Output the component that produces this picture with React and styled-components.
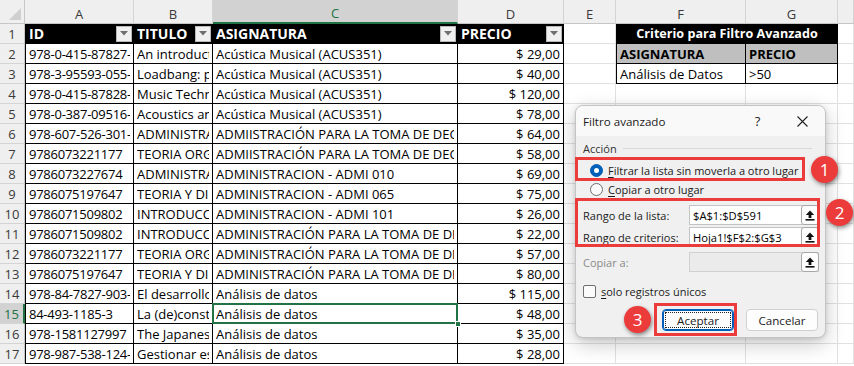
import React from 'react';
import styled, { createGlobalStyle, css } from 'styled-components';

const GlobalStyle = createGlobalStyle`
  html, body { margin: 0; padding: 0; background: #fff; }
  body { font-family: "Open Sans", "Noto Sans", sans-serif; overflow: hidden; }
  *, *::before, *::after { box-sizing: border-box; }
`;

const GREEN = '#217346';
const RED = '#ec3b3b';

const Stage = styled.div`
  position: relative;
  width: 854px;
  height: 366px;
  overflow: hidden;
  background: #fff;
`;

const Sheet = styled.div`
  display: grid;
  grid-template-columns: 25px 109px 79px 245px 106px 52px 130px 92px 1fr;
  grid-template-rows: 24px repeat(17, 20px);
  font-family: "Open Sans", "Noto Sans", sans-serif;
  font-size: 13px;
  color: #000;
`;

const Corner = styled.div`
  background: #efefef;
  border-right: 1px solid #c6c6c6;
  border-bottom: 1px solid #c6c6c6;
  display: flex;
  align-items: flex-end;
  justify-content: flex-end;
  padding: 0 3px 3px 0;
`;

const ColHead = styled.div`
  background: ${p => (p.$sel ? '#d2d2d2' : '#efefef')};
  color: ${p => (p.$sel ? GREEN : '#3a3a3a')};
  border-right: 1px solid #d4d4d4;
  border-bottom: ${p => (p.$sel ? `2px solid ${GREEN}` : '1px solid #c6c6c6')};
  display: flex;
  align-items: center;
  justify-content: center;
  padding-top: 4px;
  font-size: 13px;
`;

const RowHead = styled.div`
  background: ${p => (p.$sel ? '#d2d2d2' : '#efefef')};
  color: ${p => (p.$sel ? GREEN : '#3a3a3a')};
  border-right: ${p => (p.$sel ? `2px solid ${GREEN}` : '1px solid #c6c6c6')};
  border-bottom: 1px solid #d4d4d4;
  display: flex;
  align-items: center;
  justify-content: center;
  font-size: 13px;
`;

const Cell = styled.div`
  position: relative;
  display: flex;
  align-items: center;
  justify-content: ${p => (p.$align === 'right' ? 'flex-end' : p.$align === 'center' ? 'center' : 'flex-start')};
  padding: 0 3px;
  white-space: nowrap;
  overflow: ${p => (p.$active ? 'visible' : 'hidden')};
  background: ${p => p.$bg || 'transparent'};
  color: ${p => p.$color || '#000'};
  font-weight: ${p => (p.$bold ? 700 : 400)};
  font-size: ${p => p.$size || 13}px;
  border-right: 1px solid ${p => (p.$boxed ? '#000' : '#e1e1e1')};
  border-bottom: 1px solid ${p => (p.$boxed ? '#000' : '#e1e1e1')};
  ${p => p.$lead && css`border-left: 1px solid #000;`}
  ${p => p.$span && css`grid-column: span ${p.$span};`}
  ${p => p.$active && css`
    z-index: 2;
    &::after {
      content: '';
      position: absolute;
      left: -1px; top: -1px; right: -1px; bottom: -1px;
      border: 2px solid ${GREEN};
      pointer-events: none;
    }
    &::before {
      content: '';
      position: absolute;
      right: -4px; bottom: -4px;
      width: 6px; height: 6px;
      background: ${GREEN};
      border: 1px solid #fff;
      z-index: 3;
    }
  `}
`;

const CellText = styled.span`
  display: block;
  overflow: hidden;
  flex: 1 1 0;
  min-width: 0;
  letter-spacing: ${p => (p.$tight ? '-0.25px' : 'normal')};
`;

const HeadCell = styled(Cell)`
  background: #000;
  color: #fff;
  font-weight: 700;
  font-size: 14px;
  justify-content: space-between;
  padding: 0 1px 0 3px;
  border-right: 1px solid #000;
  border-bottom: 1px solid #000;
  ${p => p.$lead && css`border-left: 1px solid #000;`}
`;

const FilterBtn = styled.span`
  flex: 0 0 16px;
  width: 16px;
  height: 16px;
  background: #f0f0f0;
  border: 1px solid #b9b9b9;
  display: flex;
  align-items: center;
  justify-content: center;
`;

const Money = styled.span`
  font-size: 13px;
`;

/* ---------- dialog ---------- */

const Dialog = styled.div`
  position: absolute;
  left: 575px;
  top: 105px;
  width: 251px;
  height: 233px;
  background: #f0f0f0;
  border: 1px solid #c4c4c4;
  border-radius: 8px;
  box-shadow: 0 6px 20px rgba(0, 0, 0, 0.22), 0 1px 4px rgba(0, 0, 0, 0.12);
  display: flex;
  flex-direction: column;
  overflow: hidden;
  font-family: "Open Sans", "Noto Sans", sans-serif;
  font-size: 11px;
  color: #1b1b1b;
  z-index: 5;
`;

const TitleBar = styled.div`
  height: 30px;
  flex: 0 0 30px;
  background: #f9f9f9;
  display: flex;
  align-items: center;
  padding-left: 7px;
  font-size: 11.6px;
`;

const TitleText = styled.span`
  flex: 1;
`;

const TitleBtn = styled.span`
  width: 45px;
  display: flex;
  align-items: center;
  justify-content: center;
  font-size: 13px;
  color: #222;
`;

const Body = styled.div`
  flex: 1;
  display: flex;
  flex-direction: column;
  padding: 4px 7px 0 7px;
`;

const Legend = styled.div`
  display: flex;
  align-items: center;
  gap: 6px;
  height: 16px;
  color: #333;
  &::after {
    content: '';
    flex: 1;
    height: 1px;
    background: #d9d9d9;
    margin-right: 6px;
  }
`;

const RadioRow = styled.label`
  display: flex;
  align-items: center;
  gap: 5px;
  height: 19px;
  padding-left: 7px;
  margin-top: ${p => p.$mt || 0}px;
  white-space: nowrap;
`;

const Radio = styled.span`
  width: 13px;
  height: 13px;
  border-radius: 50%;
  flex: 0 0 13px;
  border: 1px solid ${p => (p.$on ? '#005fb8' : '#6e6e6e')};
  background: ${p => (p.$on ? '#005fb8' : '#fbfbfb')};
  display: flex;
  align-items: center;
  justify-content: center;
  &::after {
    content: '';
    display: ${p => (p.$on ? 'block' : 'none')};
    width: 5px;
    height: 5px;
    border-radius: 50%;
    background: #fff;
  }
`;

const U = styled.span`
  text-decoration: underline;
  text-underline-offset: 2px;
`;

const FieldRow = styled.div`
  display: flex;
  align-items: center;
  height: 20px;
  margin-top: ${p => p.$mt || 0}px;
  color: ${p => (p.$disabled ? '#8a8a8a' : '#1b1b1b')};
`;

const FieldLabel = styled.span`
  width: 106px;
  flex: 0 0 106px;
  white-space: nowrap;
`;

const FieldBox = styled.div`
  flex: 0 0 130px;
  height: 20px;
  display: flex;
  border: 1px solid ${p => (p.$disabled ? '#d0d0d0' : '#c3c3c3')};
  background: ${p => (p.$disabled ? '#ebebeb' : '#fff')};
`;

const FieldValue = styled.span`
  flex: 1;
  display: flex;
  align-items: center;
  padding-left: 3px;
  font-size: 11.2px;
  color: #000;
  white-space: nowrap;
  overflow: hidden;
`;

const PickBtn = styled.span`
  flex: 0 0 18px;
  margin: -1px -1px -1px 0;
  border: 1px solid #a8a8a8;
  border-radius: 3px;
  background: #fdfdfd;
  display: flex;
  align-items: center;
  justify-content: center;
`;

const CheckRow = styled.label`
  display: flex;
  align-items: center;
  gap: 5px;
  height: 16px;
  margin-top: 11px;
`;

const Check = styled.span`
  width: 13px;
  height: 13px;
  flex: 0 0 13px;
  border: 1px solid #6e6e6e;
  border-radius: 2px;
  background: #fbfbfb;
`;

const ButtonRow = styled.div`
  display: flex;
  justify-content: flex-end;
  gap: 12px;
  margin-top: 10px;
`;

const Button = styled.button`
  width: 72px;
  height: 22px;
  font-family: inherit;
  font-size: 11.6px;
  color: #1b1b1b;
  background: #fdfdfd;
  border: 1px solid ${p => (p.$primary ? '#005fb8' : '#d0d0d0')};
  border-radius: 4px;
  padding: 2px;
  display: flex;
  ${p => p.$primary && css`box-shadow: inset 0 0 0 1px #005fb8;`}
`;

const ButtonFace = styled.span`
  flex: 1;
  display: flex;
  align-items: center;
  justify-content: center;
  border: 1px dotted ${p => (p.$focus ? '#222' : 'transparent')};
`;

/* ---------- annotations ---------- */

const RedBox = styled.div`
  position: absolute;
  border: 3px solid ${RED};
  z-index: 6;
  pointer-events: none;
`;

const Badge = styled.div`
  position: absolute;
  width: 27px;
  height: 27px;
  border-radius: 50%;
  background: ${RED};
  color: #fff;
  font-family: "Open Sans", "Noto Sans", sans-serif;
  font-size: 17px;
  display: flex;
  align-items: center;
  justify-content: center;
  box-shadow: 1px 2px 4px rgba(0, 0, 0, 0.45);
  z-index: 7;
`;

/* ---------- data ---------- */

const rows = [
  ['978-0-415-87827-2', 'An introduction to music technology', 'Acústica Musical (ACUS351)', '$ 29,00'],
  ['978-3-95593-055-4', 'Loadbang: programming', 'Acústica Musical (ACUS351)', '$ 40,00'],
  ['978-0-415-87828-9', 'Music Technology', 'Acústica Musical (ACUS351)', '$ 120,00'],
  ['978-0-387-09516-5', 'Acoustics and Psychoacoustics', 'Acústica Musical (ACUS351)', '$ 78,00'],
  ['978-607-526-301-4', 'ADMINISTRACIÓN', 'ADMIISTRACIÓN PARA LA TOMA DE DECISIONES', '$ 64,00'],
  ['9786073221177', 'TEORIA ORGANIZACIONAL', 'ADMIISTRACIÓN PARA LA TOMA DE DECISIONES', '$ 58,00'],
  ['9786073227674', 'ADMINISTRACIÓN', 'ADMINISTRACION - ADMI 010', '$ 69,00'],
  ['9786075197647', 'TEORIA Y DISEÑO', 'ADMINISTRACION - ADMI 065', '$ 75,00'],
  ['9786071509802', 'INTRODUCCIÓN', 'ADMINISTRACION - ADMI 101', '$ 26,00'],
  ['9786071509802', 'INTRODUCCIÓN', 'ADMINISTRACIÓN PARA LA TOMA DE DECISIONES', '$ 22,00'],
  ['9786073221177', 'TEORIA ORGANIZACIONAL', 'ADMINISTRACIÓN PARA LA TOMA DE DECISIONES', '$ 57,00'],
  ['9786075197647', 'TEORIA Y DISEÑO', 'ADMINISTRACIÓN PARA LA TOMA DE DECISIONES', '$ 80,00'],
  ['978-84-7827-903-0', 'El desarrollo', 'Análisis de datos', '$ 115,00'],
  ['84-493-1185-3', 'La (de)construcción', 'Análisis de datos', '$ 48,00'],
  ['978-1581127997', 'The Japanese', 'Análisis de datos', '$ 35,00'],
  ['978-987-538-124-7', 'Gestionar es', 'Análisis de datos', '$ 28,00'],
];

const letters = ['A', 'B', 'C', 'D', 'E', 'F', 'G', ''];

const DownTri = () => (
  <svg width="8" height="5" viewBox="0 0 8 5"><path d="M0 0h8L4 4.5z" fill="#6f6f6f" /></svg>
);

const UpIcon = () => (
  <svg width="10" height="11" viewBox="0 0 10 11">
    <path d="M5 0.5L9.2 5H6.4v3H3.6V5H0.8z" fill="#111" />
    <rect x="0.5" y="9" width="9" height="1.6" fill="#111" />
  </svg>
);

const CornerTri = () => (
  <svg width="12" height="12" viewBox="0 0 12 12"><path d="M12 0V12H0z" fill="#cfcfcf" /></svg>
);

const CloseIcon = () => (
  <svg width="11" height="11" viewBox="0 0 11 11">
    <path d="M0.5 0.5L10.5 10.5M10.5 0.5L0.5 10.5" stroke="#222" strokeWidth="1.1" />
  </svg>
);

function TableHead({ label, lead }) {
  return (
    <HeadCell $lead={lead}>
      <CellText>{label}</CellText>
      <FilterBtn><DownTri /></FilterBtn>
    </HeadCell>
  );
}

function FieldLine({ label, value, disabled, mt }) {
  return (
    <FieldRow $disabled={disabled} $mt={mt}>
      <FieldLabel>{label}</FieldLabel>
      <FieldBox $disabled={disabled}>
        <FieldValue>{value}</FieldValue>
        <PickBtn><UpIcon /></PickBtn>
      </FieldBox>
    </FieldRow>
  );
}

export default function App() {
  const sideCells = (r) => {
    if (r === 1) {
      return [
        <Cell key="e" />,
        <Cell key="fg" $span={2} $boxed $lead $bg="#000" $color="#fff" $bold $size={12.6} $align="center">
          Criterio para Filtro Avanzado
        </Cell>,
        <Cell key="h" />,
      ];
    }
    if (r === 2) {
      return [
        <Cell key="e" />,
        <Cell key="f" $boxed $lead $bg="#bfbfbf" $bold>ASIGNATURA</Cell>,
        <Cell key="g" $boxed $bg="#bfbfbf" $bold>PRECIO</Cell>,
        <Cell key="h" />,
      ];
    }
    if (r === 3) {
      return [
        <Cell key="e" />,
        <Cell key="f" $boxed $lead>Análisis de Datos</Cell>,
        <Cell key="g" $boxed>&gt;50</Cell>,
        <Cell key="h" />,
      ];
    }
    return [<Cell key="e" />, <Cell key="f" />, <Cell key="g" />, <Cell key="h" />];
  };

  return (
    <Stage>
      <GlobalStyle />
      <Sheet>
        <Corner><CornerTri /></Corner>
        {letters.map((l, i) => (
          <ColHead key={i} $sel={l === 'C'}>{l}</ColHead>
        ))}

        <RowHead>1</RowHead>
        <TableHead label="ID" lead />
        <TableHead label="TITULO" />
        <TableHead label="ASIGNATURA" />
        <TableHead label="PRECIO" />
        {sideCells(1)}

        {rows.map((row, i) => {
          const r = i + 2;
          return (
            <React.Fragment key={r}>
              <RowHead $sel={r === 15}>{r}</RowHead>
              <Cell $boxed $lead><CellText $tight>{row[0]}</CellText></Cell>
              <Cell $boxed><CellText>{row[1]}</CellText></Cell>
              <Cell $boxed $active={r === 15}><CellText>{row[2]}</CellText></Cell>
              <Cell $boxed $align="right"><Money>{row[3]}</Money></Cell>
              {sideCells(r)}
            </React.Fragment>
          );
        })}
      </Sheet>

      <Dialog>
        <TitleBar>
          <TitleText>Filtro avanzado</TitleText>
          <TitleBtn>?</TitleBtn>
          <TitleBtn><CloseIcon /></TitleBtn>
        </TitleBar>
        <Body>
          <Legend>Acción</Legend>
          <RadioRow $mt={5}>
            <Radio $on />
            <span><U>F</U>iltrar la lista sin moverla a otro lugar</span>
          </RadioRow>
          <RadioRow>
            <Radio />
            <span><U>C</U>opiar a otro lugar</span>
          </RadioRow>
          <FieldLine mt={6} label={<span>Ran<U>g</U>o de la lista:</span>} value="$A$1:$D$591" />
          <FieldLine mt={2} label={<span><U>R</U>ango de criterios:</span>} value="Hoja1!$F$2:$G$3" />
          <FieldLine mt={5} label="Copiar a:" value="" disabled />
          <CheckRow>
            <Check />
            <span><U>s</U>olo registros únicos</span>
          </CheckRow>
          <ButtonRow>
            <Button $primary><ButtonFace $focus>Aceptar</ButtonFace></Button>
            <Button><ButtonFace>Cancelar</ButtonFace></Button>
          </ButtonRow>
        </Body>
      </Dialog>

      <RedBox style={{ left: 575, top: 157, width: 230, height: 24 }} />
      <RedBox style={{ left: 575, top: 198, width: 245, height: 49 }} />
      <RedBox style={{ left: 654, top: 303, width: 83, height: 33 }} />
      <Badge style={{ left: 811, top: 156 }}>1</Badge>
      <Badge style={{ left: 826, top: 199 }}>2</Badge>
      <Badge style={{ left: 624, top: 306 }}>3</Badge>
    </Stage>
  );
}
